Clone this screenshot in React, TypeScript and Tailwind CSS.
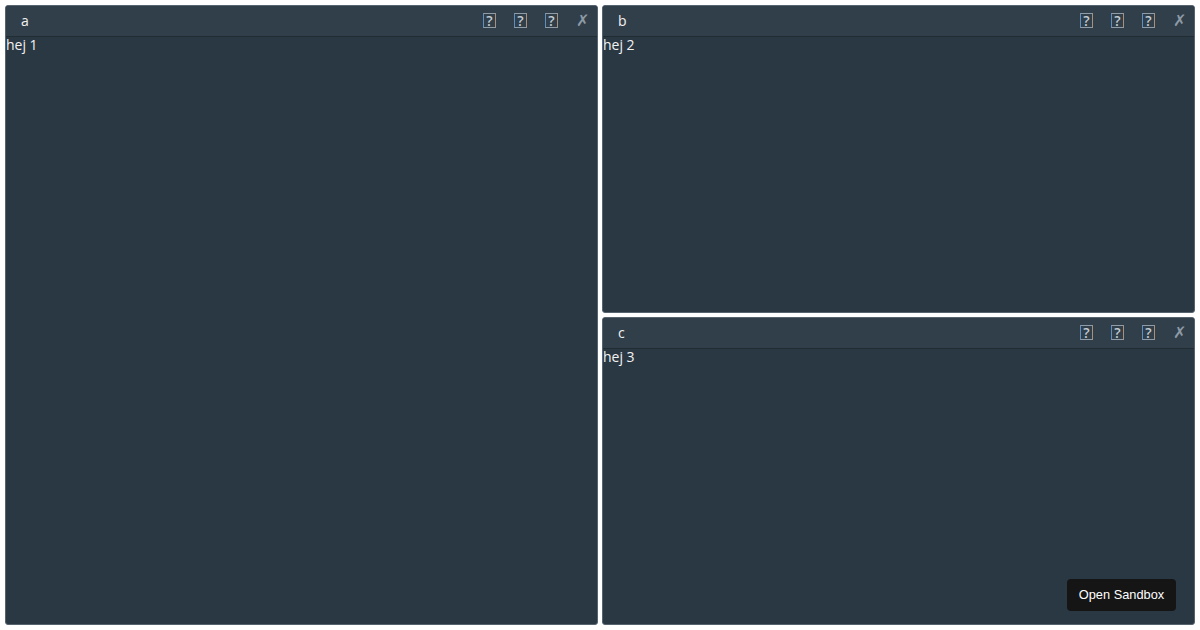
function MissingIcon() {
  return (
    <span className="mt-[1px] flex h-[15px] w-[13px] items-center justify-center border border-y-[#8f9ca8] border-l-[#5f8fc0] border-r-[#a8917c] text-[14px] font-semibold leading-none text-[#c2ccd4]">
      ?
    </span>
  )
}

function Panel({ title, body, className }: { title: string; body: string; className: string }) {
  return (
    <div className={`flex flex-col overflow-hidden rounded-[3px] border border-[#566470] bg-[#2a3843] ${className}`}>
      <div className="flex h-[31px] shrink-0 items-center border-b border-[#222c33] bg-[#313f4b] pl-[15px] pr-[8px] pb-[2px] text-[14px] text-[#f2f2f2]">
        <span className="flex-1">{title}</span>
        <div className="flex items-center gap-[18px] text-[16px]">
          <MissingIcon />
          <MissingIcon />
          <MissingIcon />
          <span className="ml-[-1px] w-[14px] text-center text-[#8d9aa6]">✗</span>
        </div>
      </div>
      <div className="flex-1 text-[14px] leading-[15px] text-[#f2f2f2]">{body}</div>
    </div>
  )
}

export default function App() {
  return (
    <div className="relative flex h-[630px] w-[1200px] gap-[4px] bg-white p-[5px] font-['Open_Sans',sans-serif]">
      <Panel title="a" body="hej 1" className="w-[593px]" />
      <div className="flex flex-1 flex-col gap-[4px]">
        <Panel title="b" body="hej 2" className="h-[308px]" />
        <Panel title="c" body="hej 3" className="flex-1" />
      </div>
      <button className="absolute left-[1067px] top-[579px] h-[32px] w-[109px] rounded-[4px] bg-[#151515] font-['Liberation_Sans',sans-serif] text-[12.8px] text-white">
        Open Sandbox
      </button>
    </div>
  )
}
